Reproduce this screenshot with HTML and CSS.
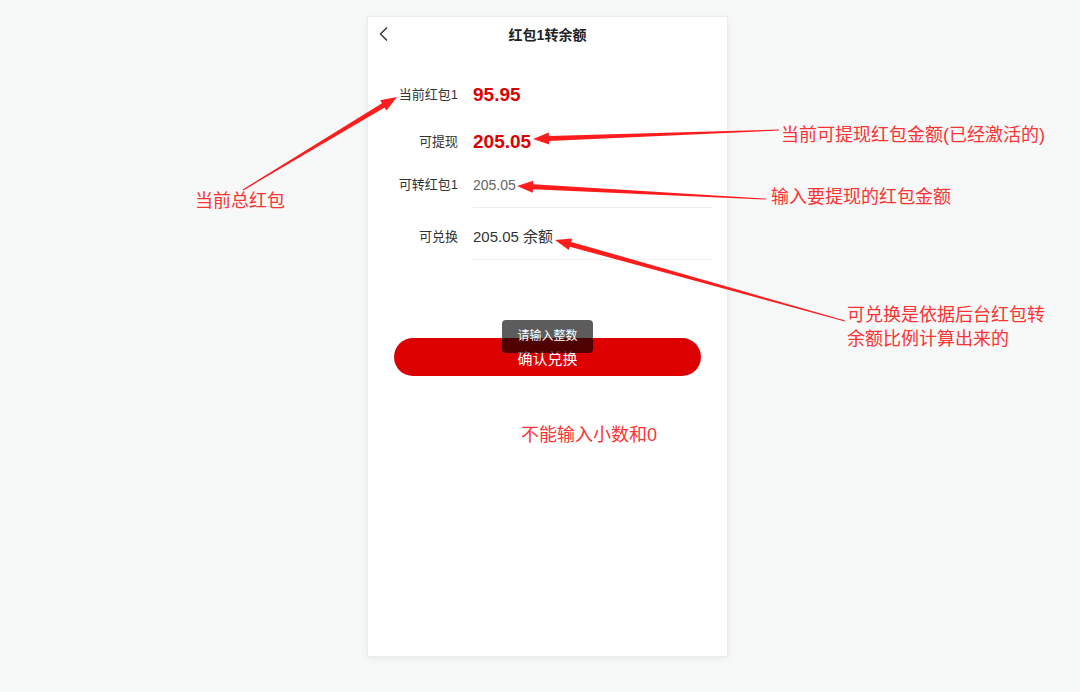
FILE: index.html
```html
<!DOCTYPE html>
<html lang="zh">

<head>
    <meta charset="UTF-8">
    <meta name="viewport" content="width=device-width, initial-scale=1.0">
    <title>红包1转余额</title>
    <link rel="stylesheet" href="styles.css">
</head>

<body>
    <div class="phone">
        <div class="header">
            <svg class="back" width="12" height="16" viewBox="0 0 12 16">
                <path d="M9 1.5 L2.5 8 L9 14.5" fill="none" stroke="#333" stroke-width="1.4" />
            </svg>
            <span>红包1转余额</span>
        </div>

        <div class="row first">
            <span class="label">当前红包1</span>
            <span class="money">95.95</span>
        </div>
        <div class="row second">
            <span class="label">可提现</span>
            <span class="money">205.05</span>
        </div>
        <div class="row third">
            <span class="label">可转红包1</span>
            <span class="field input">205.05</span>
        </div>
        <div class="row">
            <span class="label">可兑换</span>
            <span class="field result">205.05 余额</span>
        </div>

        <button class="submit">确认兑换</button>
        <div class="toast">请输入整数</div>
    </div>

    <!-- 标注 -->
    <svg class="arrows" width="1080" height="692" viewBox="0 0 1080 692">
        <polygon points="243.3,190.4 384.6,107.4 386.4,110.4 397,97 380.2,100.2 382.0,103.2 242.7,189.6" />
        <polygon points="779,130.5 549.1,140.9 549.2,144.4 533,139 548.8,132.4 548.9,135.9 779,129.5" />
        <polygon points="766,198.5 533.1,184.3 533.3,180.8 517,186 532.7,192.8 532.9,189.3 766,199.5" />
        <polygon points="845.1,320.5 571.1,241.9 572.0,238.5 555,240 568.8,250.1 569.7,246.7 844.9,321.5" />
    </svg>
    <div class="note note-total">当前总红包</div>
    <div class="note note-withdraw">当前可提现红包金额(已经激活的)</div>
    <div class="note note-input">输入要提现的红包金额</div>
    <div class="note note-rate">可兑换是依据后台红包转<br>余额比例计算出来的</div>
    <div class="note note-int">不能输入小数和0</div>
</body>

</html>
```

FILE: styles.css
```css
:root {
    --red: #dc0000;
    --note: #fb3333;
    --bg: #f7f8f8;
}

body {
    margin: 0;
    background: var(--bg);
    font-family: 'Liberation Sans', 'Noto Sans CJK SC', sans-serif;
    color: #333;
    padding: 17px 0 0 368px;
    height: 692px;
    box-sizing: border-box;
    overflow: hidden;
}

.phone {
    position: relative;
    width: 359px;
    height: 639px;
    background: white;
    box-shadow: 0 2px 8px rgba(0, 0, 0, 0.08);
    outline: 1px solid #ececec;
}

.header {
    position: relative;
    height: 36px;
    line-height: 36px;
    text-align: center;
    font-size: 14px;
    font-weight: bold;
    color: #222;
}

.back {
    position: absolute;
    left: 10px;
    top: 9px;
}

.row {
    display: grid;
    grid-template-columns: 90px 1fr;
    column-gap: 15px;
    padding-right: 15px;
    line-height: 30px;
    margin-top: 14px;
}

.row.first {
    margin-top: 27px;
}

.row.second {
    margin-top: 17px;
}

.row.third {
    margin-top: 13px;
}

.label {
    text-align: right;
    font-size: 13px;
    color: #333;
}

.money {
    font-size: 19px;
    font-weight: bold;
    color: var(--red);
}

.field {
    padding-bottom: 7px;
    border-bottom: 1px solid #eeeeee;
}

.input {
    font-size: 14px;
    color: #666;
}

.result {
    font-size: 15px;
    color: #333;
}

.submit {
    display: block;
    width: 307px;
    height: 38px;
    margin: 78px auto 0;
    border: none;
    border-radius: 19px;
    background: var(--red);
    color: white;
    font-family: inherit;
    font-size: 15px;
}

.toast {
    position: absolute;
    left: 134px;
    top: 303px;
    width: 91px;
    height: 33px;
    line-height: 33px;
    text-align: center;
    border-radius: 4px;
    background: rgba(0, 0, 0, 0.64);
    color: white;
    font-size: 12px;
}

.arrows {
    position: absolute;
    left: 0;
    top: 0;
    pointer-events: none;
}

.arrows polygon {
    fill: #ff1c1c;
}

.note {
    position: absolute;
    color: var(--note);
    font-size: 18px;
    line-height: 24px;
    white-space: nowrap;
}

.note-total { left: 195px; top: 189px; }
.note-withdraw { left: 781px; top: 123px; }
.note-input { left: 771px; top: 185px; }
.note-rate { left: 847px; top: 303px; }
.note-int { left: 521px; top: 423px; }
```
